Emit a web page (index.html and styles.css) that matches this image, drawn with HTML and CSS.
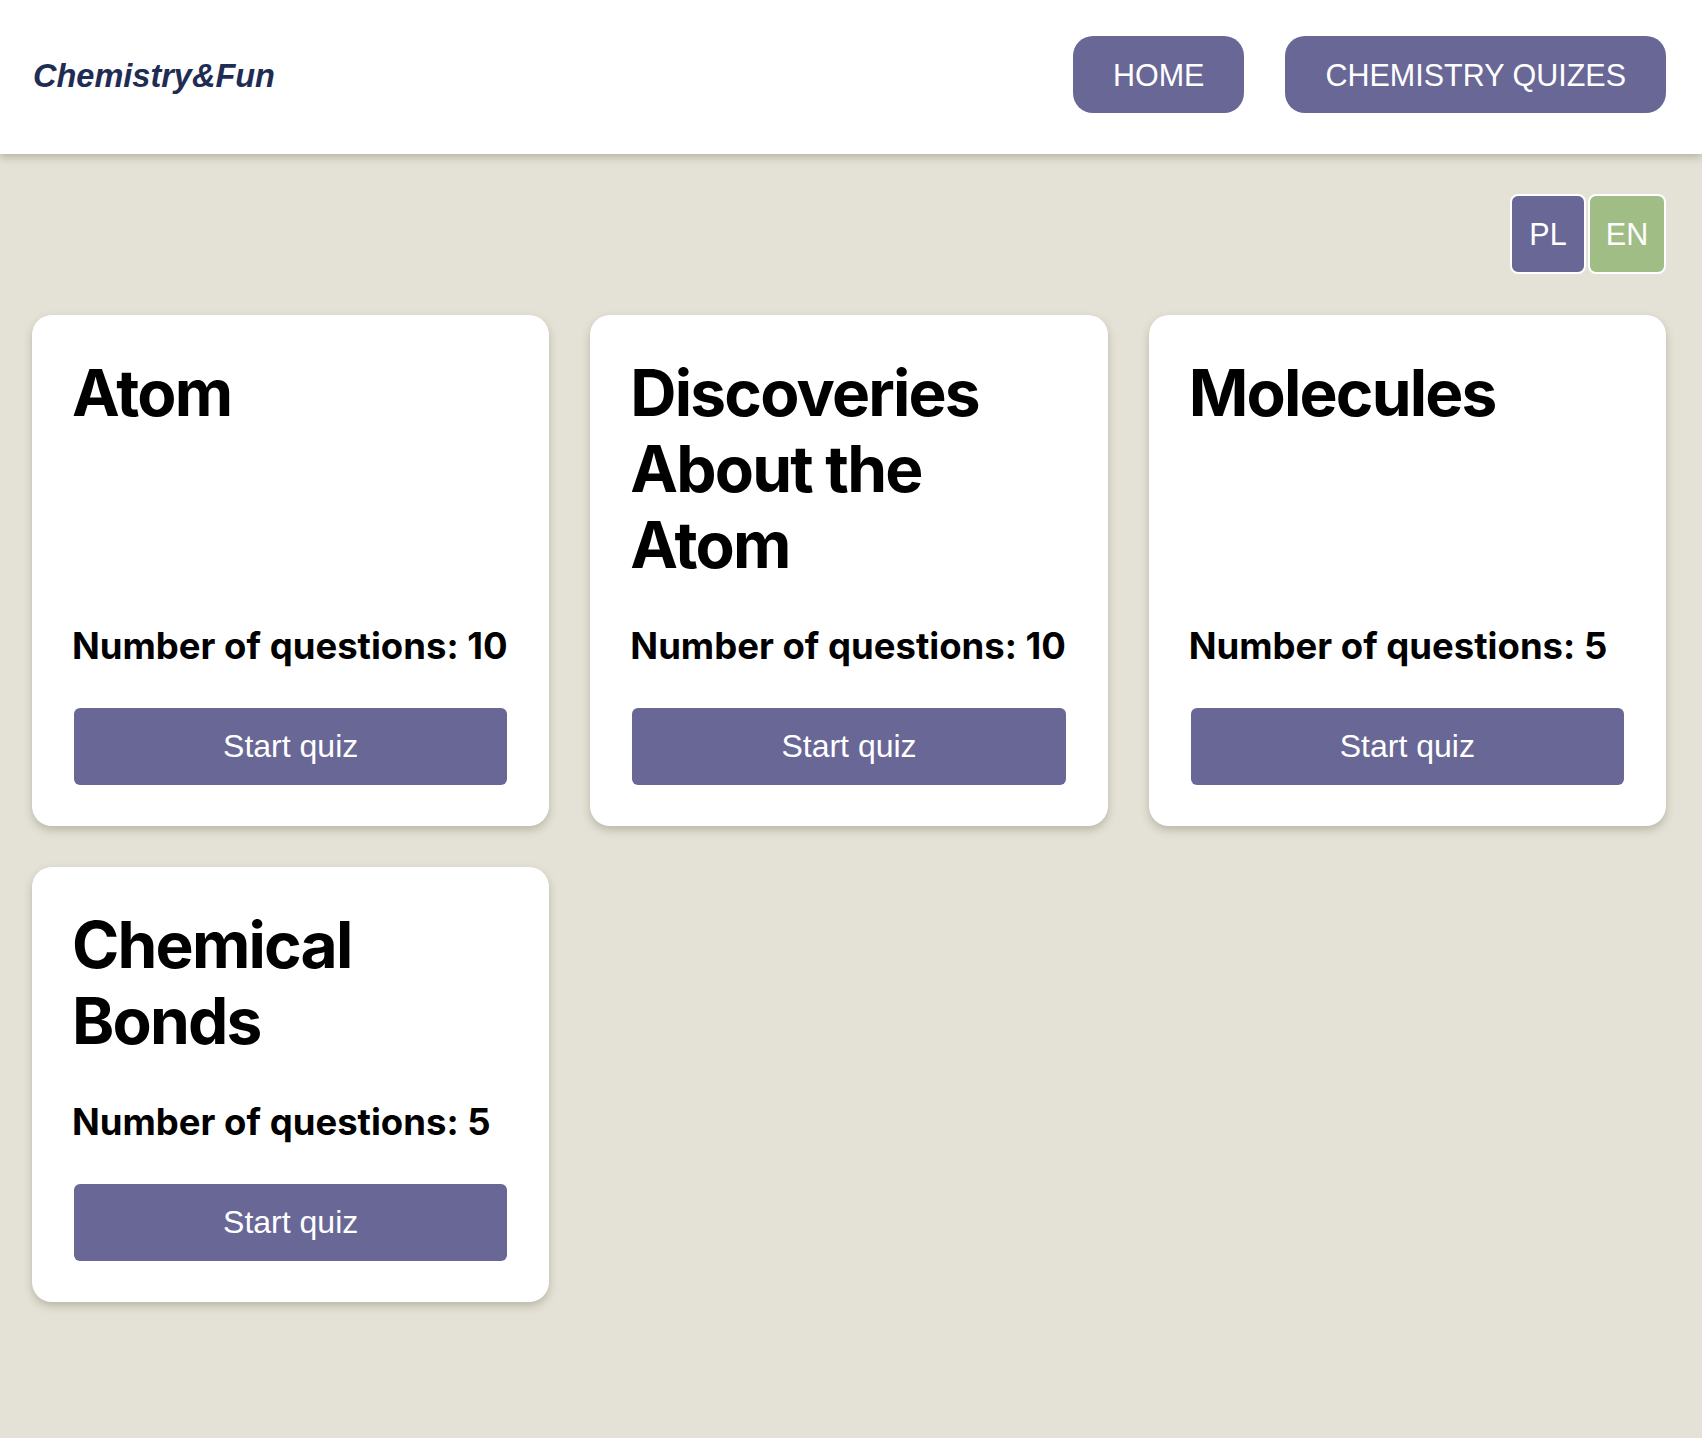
FILE: index.html
```html
<!DOCTYPE html>
<html lang="en">
<head>
<meta charset="utf-8">
<title>Chemistry&amp;Fun</title>
<link rel="stylesheet" href="styles.css">
</head>
<body>
<header class="topbar">
  <div class="logo">Chemistry&amp;Fun</div>
  <nav class="nav">
    <a class="nav-btn" href="#">HOME</a>
    <a class="nav-btn" href="#">CHEMISTRY QUIZES</a>
  </nav>
</header>
<main class="content">
  <div class="lang">
    <button class="lang-btn lang-pl">PL</button>
    <button class="lang-btn lang-en">EN</button>
  </div>
  <section class="grid">
    <article class="card">
      <h2 class="card-title">Atom</h2>
      <div class="card-bottom">
        <p class="card-count">Number of questions: 10</p>
        <button class="start-btn">Start quiz</button>
      </div>
    </article>
    <article class="card">
      <h2 class="card-title">Discoveries About the Atom</h2>
      <div class="card-bottom">
        <p class="card-count">Number of questions: 10</p>
        <button class="start-btn">Start quiz</button>
      </div>
    </article>
    <article class="card">
      <h2 class="card-title">Molecules</h2>
      <div class="card-bottom">
        <p class="card-count">Number of questions: 5</p>
        <button class="start-btn">Start quiz</button>
      </div>
    </article>
    <article class="card">
      <h2 class="card-title">Chemical Bonds</h2>
      <div class="card-bottom">
        <p class="card-count">Number of questions: 5</p>
        <button class="start-btn">Start quiz</button>
      </div>
    </article>
  </section>
</main>
</body>
</html>
```

FILE: styles.css
```css
* { box-sizing: border-box; }

html, body {
  margin: 0;
  padding: 0;
}

body {
  background: #e4e2d6;
  font-family: Inter, "Liberation Sans", Arial, sans-serif;
  color: #000;
  min-height: 1438px;
}

.topbar {
  height: 154px;
  background: #fff;
  display: flex;
  align-items: center;
  justify-content: space-between;
  padding: 0 36px 5px 33px;
  box-shadow: 0 3px 8px rgba(90, 85, 60, 0.35);
  position: relative;
  z-index: 1;
}

.logo {
  font-family: "Liberation Sans", Arial, sans-serif;
  font-weight: 700;
  font-style: italic;
  font-size: 32.5px;
  color: #1f2c54;
  margin-top: 3px;
}

.nav {
  display: flex;
  gap: 41px;
}

.nav-btn {
  display: inline-block;
  background: #696796;
  color: #fff;
  text-decoration: none;
  font-family: "Liberation Sans", Arial, sans-serif;
  font-size: 30.5px;
  line-height: 35px;
  padding: 22px 40px 20px;
  border-radius: 20px;
}

.content {
  padding: 40px 36px 60px 32px;
}

.lang {
  display: flex;
  justify-content: flex-end;
  gap: 2px;
  margin-bottom: 41px;
}

.lang-btn {
  font-family: "Liberation Sans", Arial, sans-serif;
  font-size: 30.5px;
  line-height: 35px;
  color: #fff;
  border: 2px solid #fff;
  border-radius: 8px;
  padding: 20px 0;
  height: 80px;
  cursor: pointer;
}

.lang-pl { background: #696796; width: 76px; }
.lang-en { background: #a1bd86; width: 78px; }

.grid {
  display: grid;
  grid-template-columns: repeat(3, 1fr);
  gap: 41px;
}

.card {
  background: #fff;
  border-radius: 20px;
  padding: 40px 40px 41px;
  box-shadow: 0 4px 8px rgba(90, 85, 60, 0.3);
  display: flex;
  flex-direction: column;
  justify-content: space-between;
}

.card-title {
  margin: 0;
  font-size: 64px;
  line-height: 76px;
  font-weight: 700;
  letter-spacing: -1.8px;
}

.card-count {
  margin: 41px 0 40px;
  font-size: 36.5px;
  line-height: 44px;
  font-weight: 700;
  letter-spacing: 0;
}

.start-btn {
  display: block;
  width: calc(100% - 4px);
  margin: 0 2px;
  height: 77px;
  border: none;
  border-radius: 6px;
  background: #696796;
  color: #fff;
  font-family: "Liberation Sans", Arial, sans-serif;
  font-size: 32px;
  cursor: pointer;
}
```
